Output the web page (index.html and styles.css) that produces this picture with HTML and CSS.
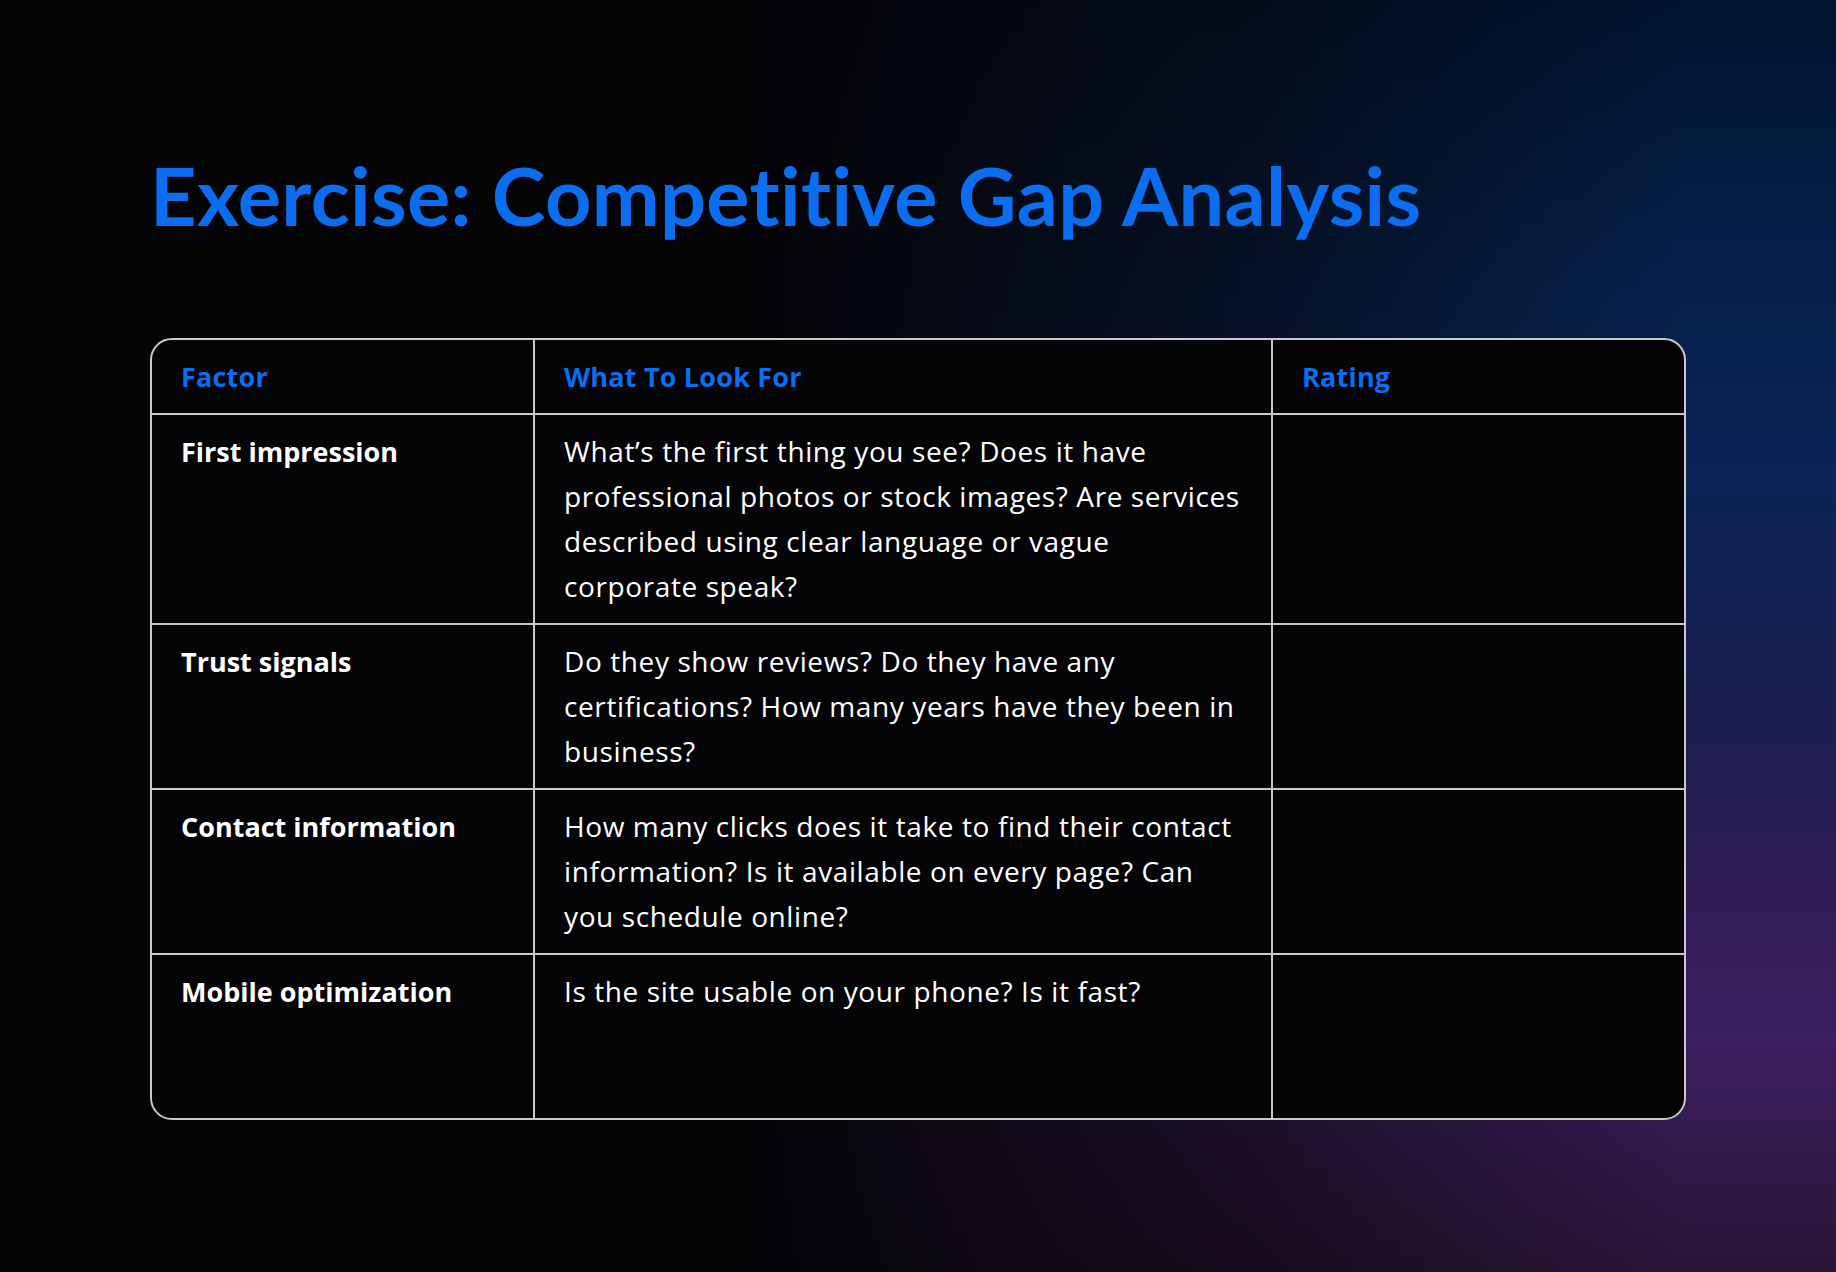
FILE: index.html
```html
<!DOCTYPE html>
<html lang="en">
<head>
<meta charset="utf-8">
<title>Exercise: Competitive Gap Analysis</title>
<link rel="stylesheet" href="styles.css">
</head>
<body>
<main class="slide">
  <h1 class="title">Exercise: Competitive Gap Analysis</h1>
  <div class="grid">
    <div class="cell head">Factor</div>
    <div class="cell head">What To Look For</div>
    <div class="cell head last">Rating</div>

    <div class="cell factor">First impression</div>
    <div class="cell desc">What’s the first thing you see? Does it have professional photos or stock images? Are services described using clear language or vague corporate speak?</div>
    <div class="cell last"></div>

    <div class="cell factor">Trust signals</div>
    <div class="cell desc">Do they show reviews? Do they have any certifications? How many years have they been in business?</div>
    <div class="cell last"></div>

    <div class="cell factor">Contact information</div>
    <div class="cell desc">How many clicks does it take to find their contact information? Is it available on every page? Can you schedule online?</div>
    <div class="cell last"></div>

    <div class="cell factor bottom">Mobile optimization</div>
    <div class="cell desc bottom">Is the site usable on your phone? Is it fast?</div>
    <div class="cell last bottom"></div>
  </div>
</main>
</body>
</html>
```
FILE: styles.css
```css
html, body {
  margin: 0;
  padding: 0;
}
body {
  width: 1836px;
  height: 1272px;
  overflow: hidden;
  font-family: "Open Sans", "Lato", sans-serif;
  background:
    linear-gradient(to right, #050407 0%, #050407 40%, rgba(5,4,7,0.55) 68%, rgba(5,4,7,0) 92%),
    linear-gradient(to bottom, #011430 0%, #06204a 22%, #0b2456 36%, #1a2050 55%, #2f1d56 70%, #3b1f5e 82%, #2a1537 100%);
}
.slide {
  padding: 150px 0 0 150px;
}
.title {
  margin: 0;
  font-family: "Lato", sans-serif;
  font-size: 81px;
  line-height: 90px;
  font-weight: 700;
  color: #0b6df0;
  letter-spacing: 0.35px;
}
.grid {
  margin-top: 98px;
  width: 1536px;
  box-sizing: border-box;
  display: grid;
  grid-template-columns: 383px 738px 1fr;
  grid-template-rows: 75px 210px 165px 165px 163px;
  border: 2px solid #c9c9c9;
  border-radius: 22px;
  overflow: hidden;
  background: #050407;
}
.cell {
  box-sizing: border-box;
  border-right: 2px solid #c9c9c9;
  border-bottom: 2px solid #c9c9c9;
  padding: 14px 16px 0 29px;
  color: #ffffff;
  font-size: 27px;
  line-height: 45px;
}
.cell.last { border-right: none; }
.cell.bottom { border-bottom: none; }
.head {
  display: flex;
  align-items: center;
  padding-top: 0;
  color: #0b6df0;
  font-weight: 700;
  letter-spacing: 0.2px;
}
.factor {
  font-weight: 700;
}
.desc {
  font-weight: 400;
  font-size: 28px;
  letter-spacing: 0.6px;
  padding-right: 25px;
}
```
